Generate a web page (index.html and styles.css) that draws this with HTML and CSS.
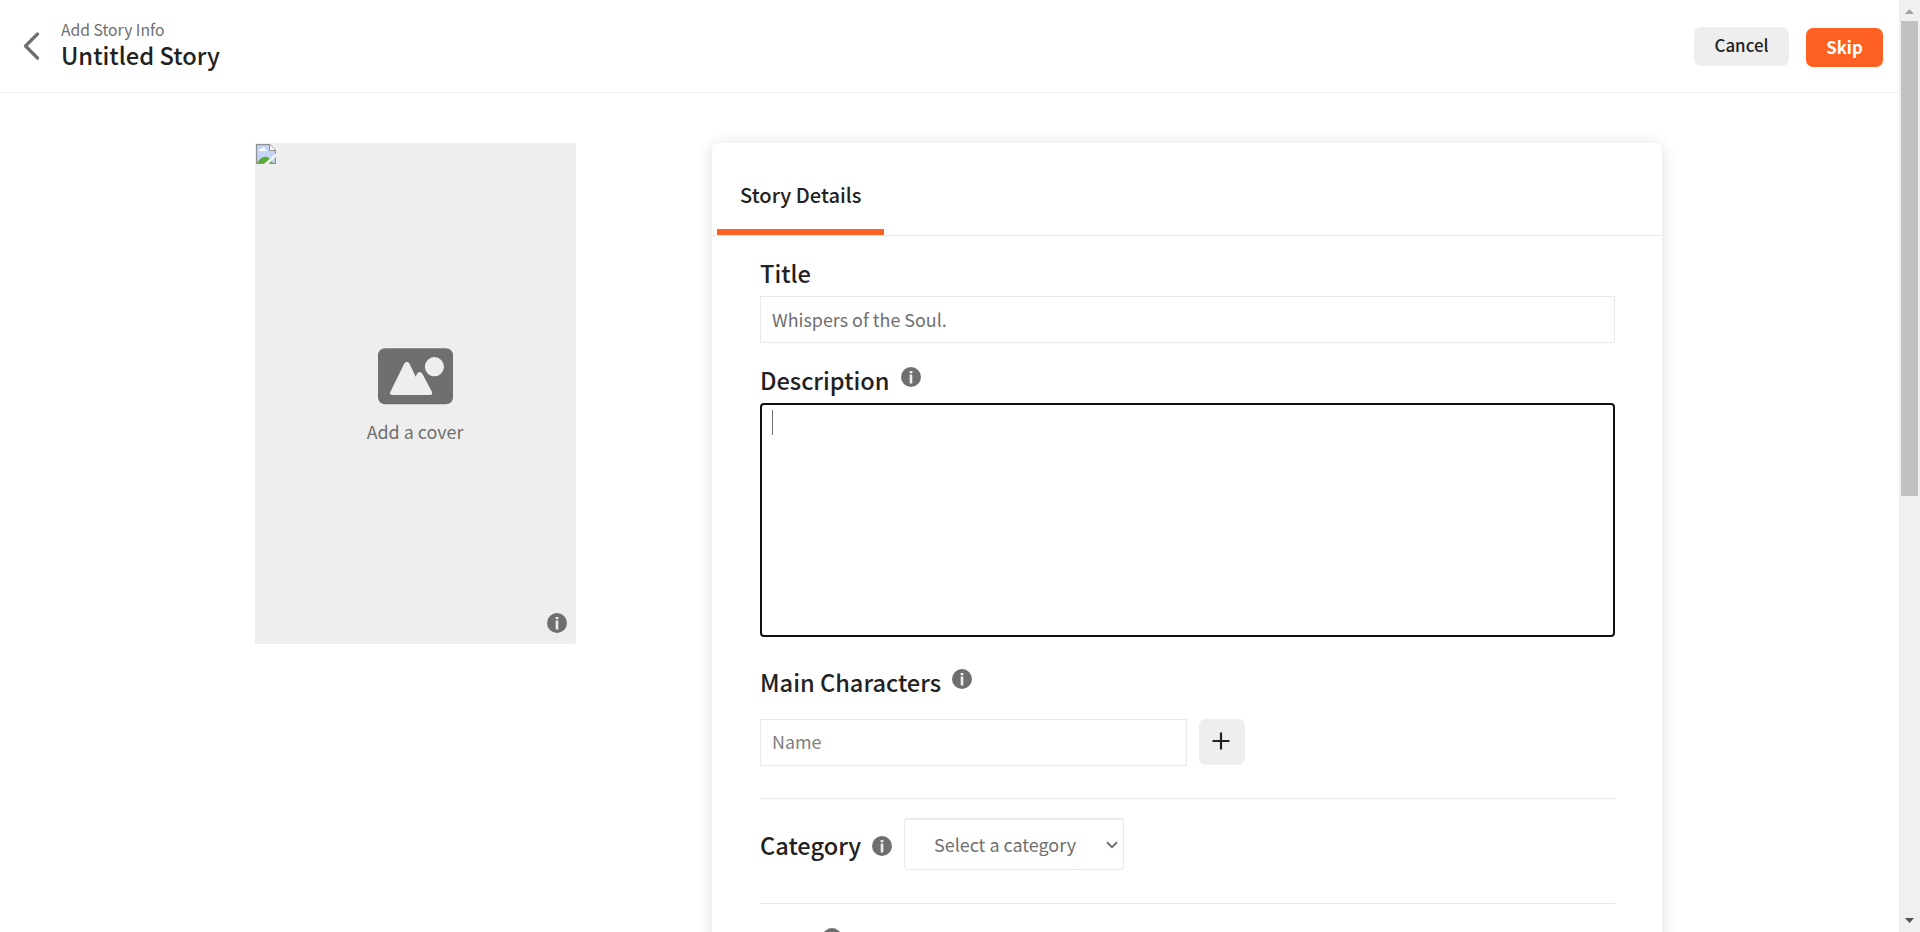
FILE: index.html
```
<!DOCTYPE html>
<html lang="en">
<head>
<meta charset="utf-8">
<title>Untitled Story</title>
<link rel="stylesheet" href="styles.css">
</head>
<body>
<svg class="defs" width="0" height="0"><symbol id="info" viewBox="0 0 20 20"><circle cx="10" cy="10" r="10" fill="#6f6f6f"/><rect x="8.6" y="3.9" width="2.8" height="2.4" rx=".6" fill="#eee"/><rect x="8.7" y="7.4" width="2.6" height="9" rx=".5" fill="#eee"/></symbol></svg>
<div class="page">
  <header class="header">
    <svg class="back" width="18" height="30" viewBox="0 0 18 30"><path d="M15.500 3L3.500 15L15.500 27" fill="none" stroke="#6f6f6f" stroke-width="3.3" stroke-linecap="round" stroke-linejoin="round"/></svg>
    <div class="heading">
      <div class="sub"><span>Add Story Info</span></div>
      <div class="name"><span>Untitled Story</span></div>
    </div>
    <button class="btn cancel"><span>Cancel</span></button>
    <button class="btn skip"><span>Skip</span></button>
  </header>
  <main class="main">
    <section class="cover">
      <svg class="broken" width="20" height="20" viewBox="0 0 20 20"><path d="M.5.5H13.5L19.5 6.5V19.5H.5Z" fill="#c4d5f6"/><path d="M1 19.5C5 11 13 10 17 19.5Z" fill="#57ad36"/><path d="M3 7C3 5 5 5 5.5 4.5C7 2.500 9 4 9 5C10.500 5 10.500 7 9.500 7Z" fill="#fff"/><path d="M.5.5H13.500L19.500 6.500V19.500H.5Z" fill="none" stroke="#919191" stroke-width="1.300"/><path d="M13.500.5V6.500H19.500" fill="#fff" stroke="#919191"/><path d="M20.500 10.500L9 21" stroke="#eee" stroke-width="3"/></svg>
      <svg class="picture" width="76" height="57" viewBox="0 0 76 57"><rect x="0" y=".3" width="75" height="56" rx="7" fill="#6f6f6f"/><circle cx="56.400" cy="18.700" r="9.600" fill="#eee"/><path d="M26.200 15.800Q28.900 11.800 31.600 15.800L37.700 28.700L38.900 26Q41.700 21.800 44.500 26L54 44Q54.900 47 52.200 47H14.200Q11.300 47 12.300 44Z" fill="#eee"/></svg>
      <div class="cover-label"><span>Add a cover</span></div>
      <svg class="info cover-info"><use href="#info"/></svg>
    </section>
    <section class="card">
      <nav class="tabs"><div class="tab"><span>Story Details</span></div></nav>
      <div class="form">
        <div class="label title-label"><span>Title</span></div>
        <div class="field"><span>Whispers of the Soul.</span></div>
        <div class="label desc-label"><span>Description</span><svg class="info raised"><use href="#info"/></svg></div>
        <div class="area"><i class="caret"></i></div>
        <div class="label main-label"><span>Main Characters</span><svg class="info raised"><use href="#info"/></svg></div>
        <div class="characters">
          <div class="field short"><span>Name</span></div>
          <button class="plus"><svg width="18" height="18" viewBox="0 0 18 18"><path d="M9 .5V17.500M.5 9H17.500" stroke="#222" stroke-width="2.200"/></svg></button>
        </div>
        <div class="category">
          <div class="label"><span>Category</span><svg class="info"><use href="#info"/></svg></div>
          <div class="select"><span>Select a category</span><svg width="12" height="8" viewBox="0 0 12 8"><path d="M1 1.200L6 6.200L11 1.200" fill="none" stroke="#6f6f6f" stroke-width="2"/></svg></div>
        </div>
        <div class="tags"><svg class="info"><use href="#info"/></svg></div>
      </div>
    </section>
  </main>
</div>
<aside class="scroll">
  <svg width="9" height="5" viewBox="0 0 9 5"><path d="M4.500 0L9 5H0Z" fill="#a3a3a3"/></svg>
  <div class="thumb"></div>
  <svg class="down" width="9" height="5" viewBox="0 0 9 5"><path d="M0 0H9L4.500 5Z" fill="#505050"/></svg>
</aside>
</body>
</html>
```
FILE: styles.css
```
* { box-sizing: border-box; }
body { margin: 0; display: flex; height: 932px; overflow: hidden; background: #fff; color: #222; font-family: "Noto Sans CJK SC", "Noto Sans", sans-serif; }
.defs { position: absolute; }
.page { width: 1899px; height: 932px; overflow: hidden; }
span { white-space: nowrap; }
svg { display: block; flex: none; }
.header { height: 93px; border-bottom: 1px solid #eee; display: flex; align-items: flex-start; padding-right: 16px; }
.back { margin: 31px 0 0 22px; }
.heading { margin: 20px auto 0 21px; }
.sub { color: #6f6f6f; font-size: 15.700px; line-height: 20px; }
.name { font-size: 23.700px; font-weight: 500; line-height: 31px; }
.btn { border: 0; border-radius: 7px; height: 39px; padding: 0; font-family: inherit; text-align: center; }
.cancel { width: 95px; margin-top: 27px; padding-bottom: 4px; background: #eee; color: #222; font-size: 16.900px; font-weight: 500; }
.skip { width: 77px; margin: 28px 0 0 17px; padding-bottom: 1px; background: #ff6122; color: #fff; font-size: 16.700px; font-weight: 700; }
.main { display: flex; align-items: flex-start; padding: 50px 0 0 255px; }
.cover { width: 321px; height: 501px; background: #eee; border-radius: 0 2px 2px 0; display: flex; flex-direction: column; align-items: center; }
.broken { align-self: flex-start; margin: 1px 0 0 1px; }
.picture { margin-top: 184px; }
.cover-label { margin-top: 11px; padding-right: 1px; height: 30px; line-height: 30px; font-size: 17.900px; color: #6f6f6f; }
.info { width: 20px; height: 20px; }
.cover-info { align-self: flex-end; margin: auto 9px 11px 0; }
.card { width: 950px; height: 900px; margin-left: 136px; border-radius: 6px; box-shadow: 0 2px 16px rgba(0,0,0,.14); }
.tabs { height: 93px; border-bottom: 1px solid #eaeaea; padding-left: 5px; }
.tab { width: 167px; height: 92px; border-bottom: 6px solid #ff6122; padding-left: 23px; font-size: 20.100px; font-weight: 500; line-height: 104px; }
.form { padding: 0 47px 0 48px; }
.label { display: flex; gap: 11px; font-size: 23.600px; font-weight: 500; line-height: 32px; height: 32px; align-items: center; }
.label span { margin-top: -2px; }
.title-label { margin-top: 22px; }
.field { height: 47px; margin-top: 6px; border: 1px solid #eaeaea; padding-left: 11px; font-size: 17.900px; line-height: 44px; color: #6f6f6f; }
.desc-label { margin-top: 22px; }
.raised { margin-bottom: 8px; }
.area { height: 234px; margin-top: 6px; border: 2px solid #101010; border-radius: 4px; padding: 5px 0 0 10px; }
.caret { display: block; width: 1px; height: 25px; background: #6f6f6f; }
.main-label { margin-top: 30px; }
.main-label span { margin-top: -3px; }
.characters { display: flex; align-items: flex-start; margin-top: 20px; height: 80px; border-bottom: 1px solid #eaeaea; }
.short { width: 427px; margin: 0; color: #808080; line-height: 43px; }
.plus { width: 46px; height: 46px; margin-left: 12px; border: 0; border-radius: 7px; background: #eee; padding: 0 3px 2px 0; display: flex; align-items: center; justify-content: center; }
.category { height: 105px; border-bottom: 1px solid #eaeaea; display: flex; align-items: flex-start; padding-top: 19px; }
.category .label { margin-top: 12px; width: 144px; justify-content: space-between; padding-right: 12px; }
.select { width: 220px; height: 52px; border: 1px solid #eaeaea; border-top-width: 2px; border-radius: 4px; display: flex; align-items: center; justify-content: space-between; padding: 0 5px 0 29px; font-size: 17.950px; line-height: 49px; color: #6f6f6f; }
.tags { padding: 24px 0 0 62px; }
.scroll { width: 21px; height: 932px; background: #f0f0f0; display: flex; flex-direction: column; align-items: center; padding-top: 9px; }
.thumb { width: 17px; height: 475px; margin-top: 7px; background: #c1c1c1; }
.down { margin: auto 0 9px; }
```
